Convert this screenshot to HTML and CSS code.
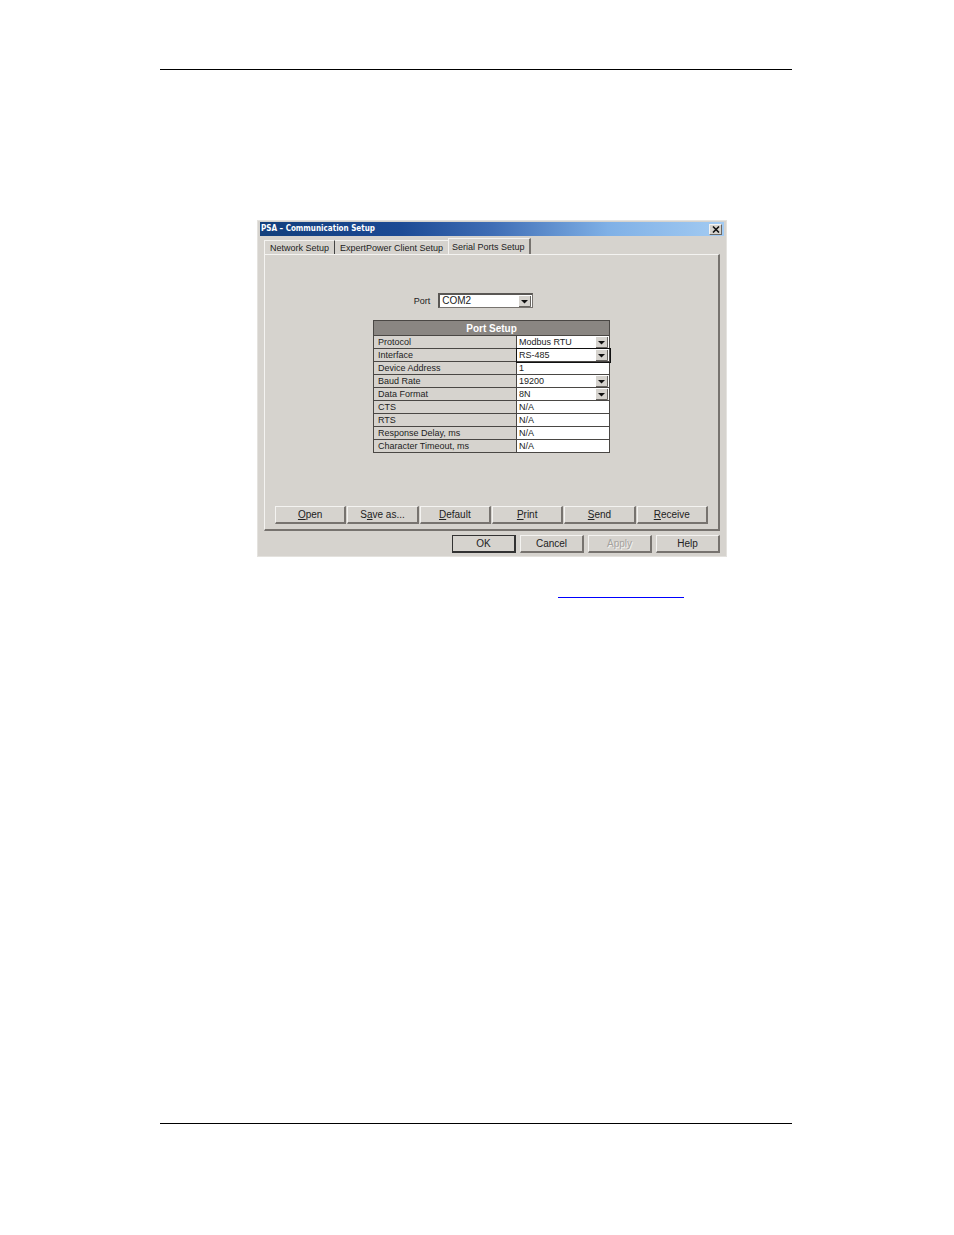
FILE: index.html
```html
<!DOCTYPE html>
<html lang="en">

<head>
    <meta charset="UTF-8">
    <meta name="viewport" content="width=device-width, initial-scale=1.0">
    <title>PSA – Communication Setup</title>
    <link rel="stylesheet" href="styles.css">
</head>

<body>
    <header class="page-head"></header>
    <main>
        <form class="dialog">
            <div class="titlebar">
                <h1>PSA – Communication Setup</h1>
                <button type="button" class="close" aria-label="Close">
                    <svg viewBox="0 0 8 7" width="8" height="7">
                        <path d="M1 0.5 L7 6.5 M7 0.5 L1 6.5" stroke="#111" stroke-width="1.6" />
                    </svg>
                </button>
            </div>
            <nav class="tabs">
                <button type="button" class="tab">Network Setup</button>
                <button type="button" class="tab">ExpertPower Client Setup</button>
                <button type="button" class="tab active">Serial Ports Setup</button>
            </nav>
            <section class="panel">
                <p class="port">
                    <label for="port">Port</label>
                    <select id="port">
                        <option>COM2</option>
                    </select>
                </p>
                <table class="setup">
                    <colgroup>
                        <col class="names">
                        <col class="values">
                    </colgroup>
                    <thead>
                        <tr>
                            <th colspan="2">Port Setup</th>
                        </tr>
                    </thead>
                    <tbody>
                        <tr>
                            <td><label for="protocol">Protocol</label></td>
                            <td><select id="protocol"><option>Modbus RTU</option></select></td>
                        </tr>
                        <tr>
                            <td><label for="interface">Interface</label></td>
                            <td class="current"><select id="interface"><option>RS-485</option></select></td>
                        </tr>
                        <tr>
                            <td><label for="address">Device Address</label></td>
                            <td><input type="text" id="address" value="1"></td>
                        </tr>
                        <tr>
                            <td><label for="baud">Baud Rate</label></td>
                            <td><select id="baud"><option>19200</option></select></td>
                        </tr>
                        <tr>
                            <td><label for="format">Data Format</label></td>
                            <td><select id="format"><option>8N</option></select></td>
                        </tr>
                        <tr>
                            <td><label for="cts">CTS</label></td>
                            <td><input type="text" id="cts" value="N/A"></td>
                        </tr>
                        <tr>
                            <td><label for="rts">RTS</label></td>
                            <td><input type="text" id="rts" value="N/A"></td>
                        </tr>
                        <tr>
                            <td><label for="delay">Response Delay, ms</label></td>
                            <td><input type="text" id="delay" value="N/A"></td>
                        </tr>
                        <tr>
                            <td><label for="timeout">Character Timeout, ms</label></td>
                            <td><input type="text" id="timeout" value="N/A"></td>
                        </tr>
                    </tbody>
                </table>
                <div class="actions">
                    <button type="button"><u>O</u>pen</button>
                    <button type="button">S<u>a</u>ve as...</button>
                    <button type="button"><u>D</u>efault</button>
                    <button type="button"><u>P</u>rint</button>
                    <button type="button"><u>S</u>end</button>
                    <button type="button"><u>R</u>eceive</button>
                </div>
            </section>
            <div class="buttons">
                <button type="submit" class="default">OK</button>
                <button type="button">Cancel</button>
                <button type="button" disabled>Apply</button>
                <button type="button">Help</button>
            </div>
        </form>
        <a class="reference" href="#port" aria-label="Port"></a>
    </main>
    <footer class="page-foot"></footer>
</body>

</html>
```

FILE: styles.css
```css
* {
    box-sizing: border-box;
}

body {
    display: flex;
    flex-direction: column;
    min-height: 100vh;
    margin: 0;
    padding: 69px 162px 111px 160px;
    background: #fff;
    color: #222;
    font-family: 'Liberation Sans', Arial, sans-serif;
    font-size: 10px;
    line-height: 12px;
}

button,
input,
select {
    color: inherit;
    font: inherit;
}

.page-head,
.page-foot {
    border-top: 1px solid #000;
}

main {
    flex: 1;
    padding: 150px 65px 0 97px;
}

.dialog {
    padding: 1px 2px;
    background: #d6d3ce;
    border: 1px solid #e4e2de;
}

.titlebar {
    display: flex;
    align-items: center;
    justify-content: space-between;
    height: 14px;
    padding: 0 2px 0 1px;
    background: linear-gradient(to right, #123f7c, #1c4a94 30%, #3f6db5 50%, #7fb0e6 75%, #a3cbf2);
    color: #fff;
}

.titlebar h1 {
    margin: 0;
    font-family: 'DejaVu Sans Condensed', 'DejaVu Sans', Verdana, sans-serif;
    font-size: 8px;
}

.close {
    display: flex;
    align-items: center;
    justify-content: center;
    width: 13px;
    height: 11px;
    padding: 0;
    background: #d6d3ce;
    border: 1px solid;
    border-color: #f4f3f1 #6b6864 #6b6864 #f4f3f1;
}

.tabs {
    display: flex;
    align-items: flex-end;
    height: 18px;
    padding-left: 4px;
}

.tab {
    height: 14px;
    padding: 0 5px;
    background: none;
    border: 0 solid #f4f3f1;
    border-top-width: 1px;
    font-size: 9px;
    line-height: 15px;
    white-space: nowrap;
}

.tab:first-child {
    border-left-width: 1px;
    border-right: 1px solid #444;
}

.tab.active {
    height: 16px;
    padding: 0 4px 0 3px;
    border-left-width: 1px;
    border-right: 2px solid #77736f;
    line-height: 14px;
}

.panel {
    margin: 0 4px;
    padding: 38px 10px 5px;
    border: 1px solid #f4f3f1;
    border-right: 2px solid #77736f;
    border-bottom: 2px solid #77736f;
}

.port {
    display: flex;
    align-items: center;
    justify-content: center;
    gap: 8px;
    margin: 0 0 12px;
    padding-right: 36px;
}

.port label {
    font-size: 9px;
}

select {
    appearance: none;
    display: block;
    width: 100%;
    height: 12px;
    padding: 0 0 0 2px;
    border: 0;
    border-radius: 0;
    background: #fff url("data:image/svg+xml,%3Csvg xmlns='http://www.w3.org/2000/svg' width='12' height='11'%3E%3Cpath fill='%23d6d3ce' d='M0 0h12v11H0z'/%3E%3Cpath fill='none' stroke='%23686561' d='M11.5 0v10.5H0'/%3E%3Cpath fill='%23111' d='M2 4h7L5.500 7.500z'/%3E%3C/svg%3E") no-repeat right 1px center;
}

.port select {
    width: 95px;
    height: 15px;
    border: 1px solid #77736f;
    border-top: 2px solid #5a5754;
    border-left: 2px solid #5a5754;
}

.setup {
    width: 237px;
    margin: 0 auto;
    border: 1px solid #4a4744;
    border-collapse: collapse;
    table-layout: fixed;
    font-size: 9px;
}

.setup .values {
    width: 93px;
}

.setup th {
    height: 15px;
    padding: 0;
    background: #8a8682;
    color: #fff;
    font-size: 10px;
    line-height: 13px;
}

.setup td {
    height: 13px;
    padding: 0 0 0 4px;
    border: 1px solid #4a4744;
}

.setup td + td {
    padding: 0;
    background: #fff;
}

.setup .current {
    outline: 1px solid #111;
}

.setup input {
    display: block;
    width: 100%;
    height: 12px;
    padding: 0 2px;
    border: 0;
    background: #fff;
}

.setup label {
    display: block;
}

.actions {
    display: grid;
    grid-template-columns: repeat(6, 1fr);
    gap: 1px;
    margin-top: 53px;
}

.actions button,
.buttons button {
    height: 18px;
    padding: 0;
    background: #d6d3ce;
    border: 1px solid;
    border-color: #f4f3f1 #77736f #77736f #f4f3f1;
    border-right-width: 2px;
    border-bottom-width: 2px;
    line-height: 14px;
}

.buttons {
    display: flex;
    justify-content: flex-end;
    gap: 4px;
    padding: 4px 4px 2px;
}

.buttons button {
    width: 64px;
}

.buttons .default {
    border-color: #333;
}

.buttons button:disabled {
    color: #a5a29e;
    text-shadow: 1px 1px #f4f3f1;
}

.reference {
    display: block;
    width: 126px;
    height: 41px;
    margin-left: auto;
    margin-right: 43px;
    border-bottom: 1px solid #00f;
}
```
